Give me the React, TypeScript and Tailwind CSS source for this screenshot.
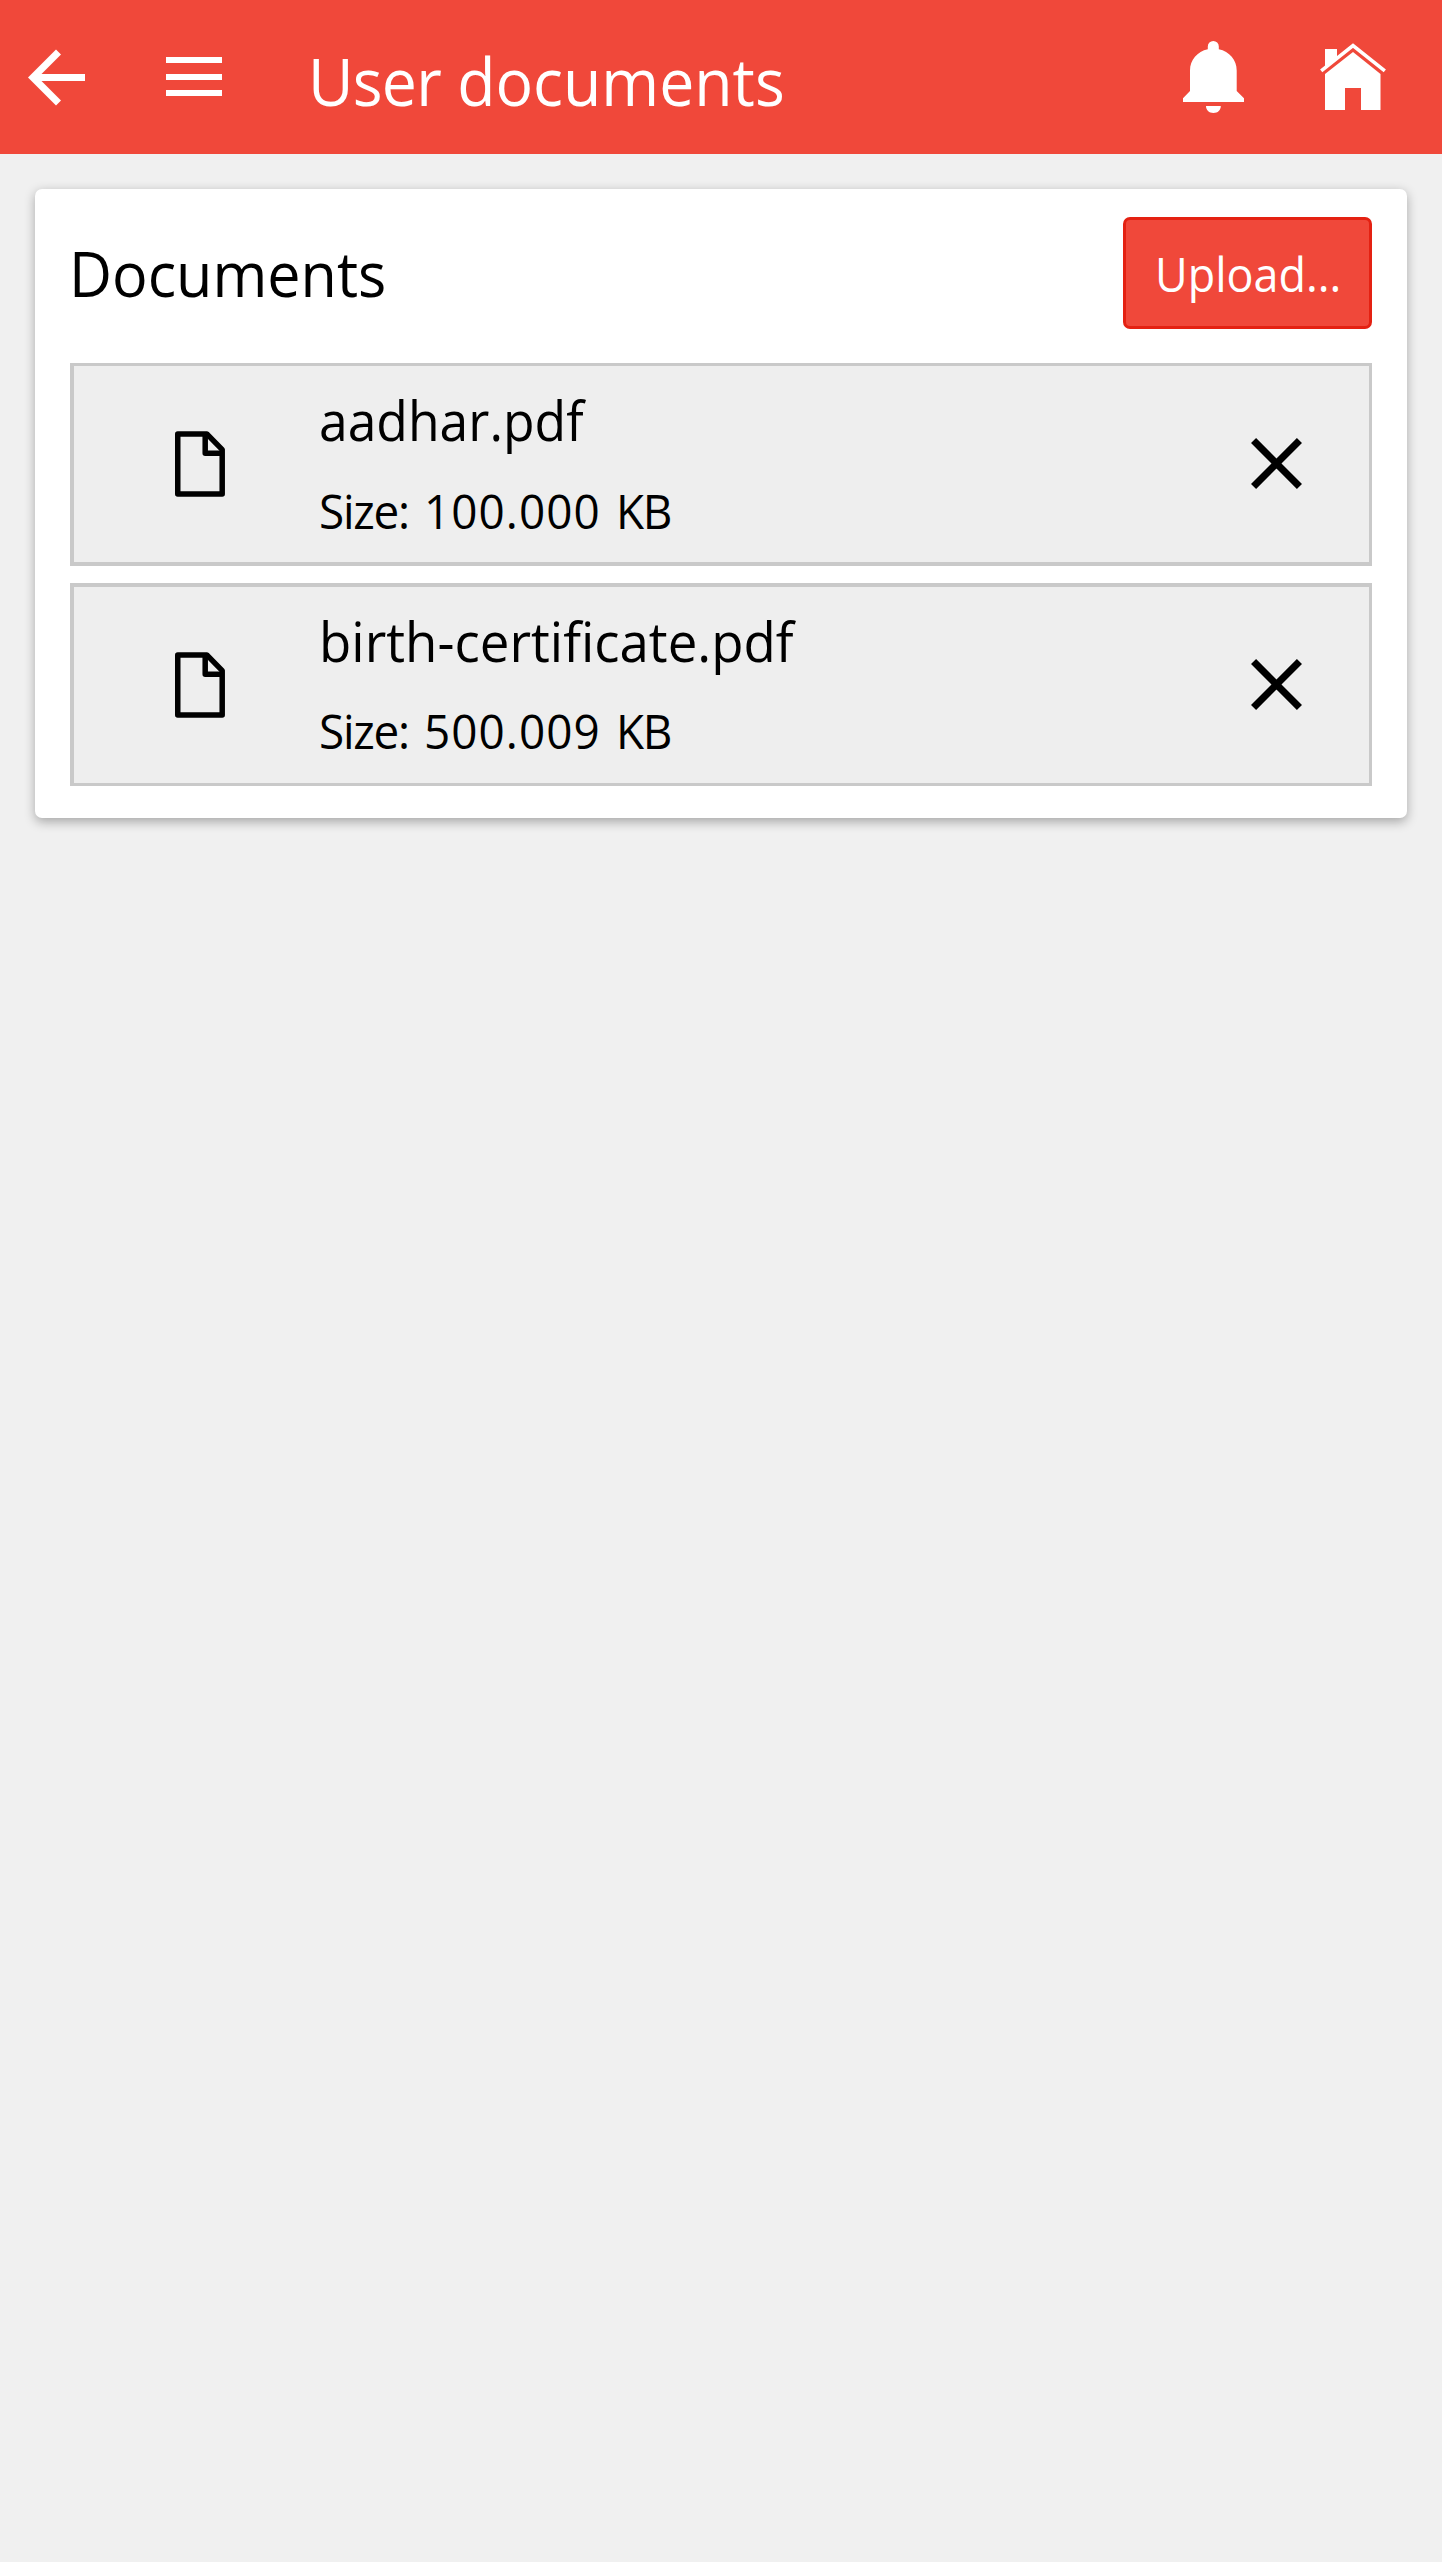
type Doc = { name: string; size: string; nameClass: string; sizeClass: string; rowClass: string };

const documents: Doc[] = [
  {
    name: 'aadhar.pdf',
    size: '100.000',
    nameClass: 'scale-x-[0.956]',
    sizeClass: 'pt-px',
    rowClass: 'border-t-[3px] border-b-4',
  },
  {
    name: 'birth-certificate.pdf',
    size: '500.009',
    nameClass: 'scale-x-[0.978]',
    sizeClass: 'pt-0',
    rowClass: 'border-t-4 border-b-[3px]',
  },
];

function BackIcon() {
  return (
    <svg className="h-[58px] w-[58px]" viewBox="0 0 58 58" fill="#fff">
      <path d="M0 29.500 28 1.500 33 6.500 13.500 26H57V33H13.500L33 52.500 28 57.500Z" />
    </svg>
  );
}

function MenuIcon() {
  return (
    <svg className="h-[39px] w-14" viewBox="0 0 56 39" fill="#fff" shapeRendering="crispEdges">
      <path d="M0 0h56v6H0zM0 17h56v6H0zM0 33h56v6H0z" />
    </svg>
  );
}

function BellIcon() {
  return (
    <svg className="h-[72px] w-[61px]" viewBox="0 0 61 72" fill="#fff">
      <path d="M24.8 8.3V5.5a5.5 5.5 0 0 1 11 0v2.8C46.500 10.500 53.700 19 53.700 29.500V50l7.300 7.200V61H0v-3.800L7 50V29.500C7 19 14.300 10.500 24.800 8.300Z" />
      <path d="M23 65h14.800c0 4.200-3 7-7.400 7S23 69.200 23 65Z" />
    </svg>
  );
}

function HomeIcon() {
  return (
    <svg className="h-[68px] w-[66px]" viewBox="0 0 66 68" fill="#fff">
      <path d="M33 9 60.500 31V67H41V45H25V67H5V31Z" />
      <path d="M5 6H17V14L5 24Z" />
      <path d="M1.200 27.800 33 2.600 64.800 27.800" fill="none" stroke="#fff" strokeWidth="3.600" />
    </svg>
  );
}

function FileIcon() {
  return (
    <svg className="h-[66px] w-[50px]" viewBox="0 0 50 66" fill="none" stroke="#000" strokeWidth="5.500" strokeLinejoin="round">
      <path d="M2.750 2.900H31.800L47.200 18.600V63H2.750Z" />
      <path d="M30.200 3V22.200H47" />
    </svg>
  );
}

function CloseIcon() {
  return (
    <svg className="h-[51px] w-[51px]" viewBox="0 0 51 51" fill="none" stroke="#000" strokeWidth="7.200">
      <path d="M2.550 2.550 48.450 48.450M48.450 2.550 2.550 48.450" />
    </svg>
  );
}

function DocumentRow({ doc }: { doc: Doc }) {
  return (
    <li className={`flex h-[203px] border-r-[3px] border-l-4 border-[#c9c9c9] bg-[#eeeeee] ${doc.rowClass}`}>
      <div className="w-[245px] shrink-0 pt-[65px] pl-[101px]">
        <FileIcon />
      </div>
      <div className="flex-1 pt-[9px] leading-[90px] whitespace-nowrap">
        <div className={`origin-left text-[54px] ${doc.nameClass}`}>{doc.name}</div>
        <div className={`flex origin-left scale-x-[0.955] text-[48px] ${doc.sizeClass}`}>
          <span className="w-[110px] tracking-[-1.3px]">Size:</span>
          <span className="w-[201px] tracking-[1.1px]">{doc.size}</span>
          <span className="tracking-[-1.5px]">KB</span>
        </div>
      </div>
      <button className="mr-[67px] self-start pt-[72px]" aria-label="Remove">
        <CloseIcon />
      </button>
    </li>
  );
}

export default function App() {
  return (
    <div className="min-h-[2562px] w-full bg-[#f0f0f0] font-['Open_Sans',sans-serif] text-black">
      <header className="flex h-[154px] items-center bg-[#f0483a] pl-7 text-white">
        <BackIcon />
        <div className="ml-20 pb-px">
          <MenuIcon />
        </div>
        <h1 className="ml-[86px] flex-1 origin-left scale-x-[0.947] pt-[5px] text-[66px] leading-[90px] whitespace-nowrap">
          <span className="tracking-[-0.8px]">User</span> documents
        </h1>
        <BellIcon />
        <div className="mr-14 ml-[76px]">
          <HomeIcon />
        </div>
      </header>

      <main className="mx-[35px] mt-[35px] h-[629px] rounded-[7px] bg-white px-[35px] pt-7 shadow-[0_3.5px_10.5px_rgba(0,0,0,0.3)]">
        <div className="flex h-28 items-center justify-between">
          <h2 className="-ml-px origin-left scale-x-[0.956] text-[62px] leading-[84px]">Documents</h2>
          <button className="h-28 w-[249px] rounded-[7px] border-[3.5px] border-[#e42112] bg-[#f0483a] pt-0.5 pl-[29px] text-left text-white">
            <span className="block origin-left scale-x-[0.935] text-[48px] leading-[66px]">Upload...</span>
          </button>
        </div>
        <ul className="mt-[34px] flex flex-col gap-[17px]">
          {documents.map((doc) => (
            <DocumentRow key={doc.name} doc={doc} />
          ))}
        </ul>
      </main>
    </div>
  );
}
